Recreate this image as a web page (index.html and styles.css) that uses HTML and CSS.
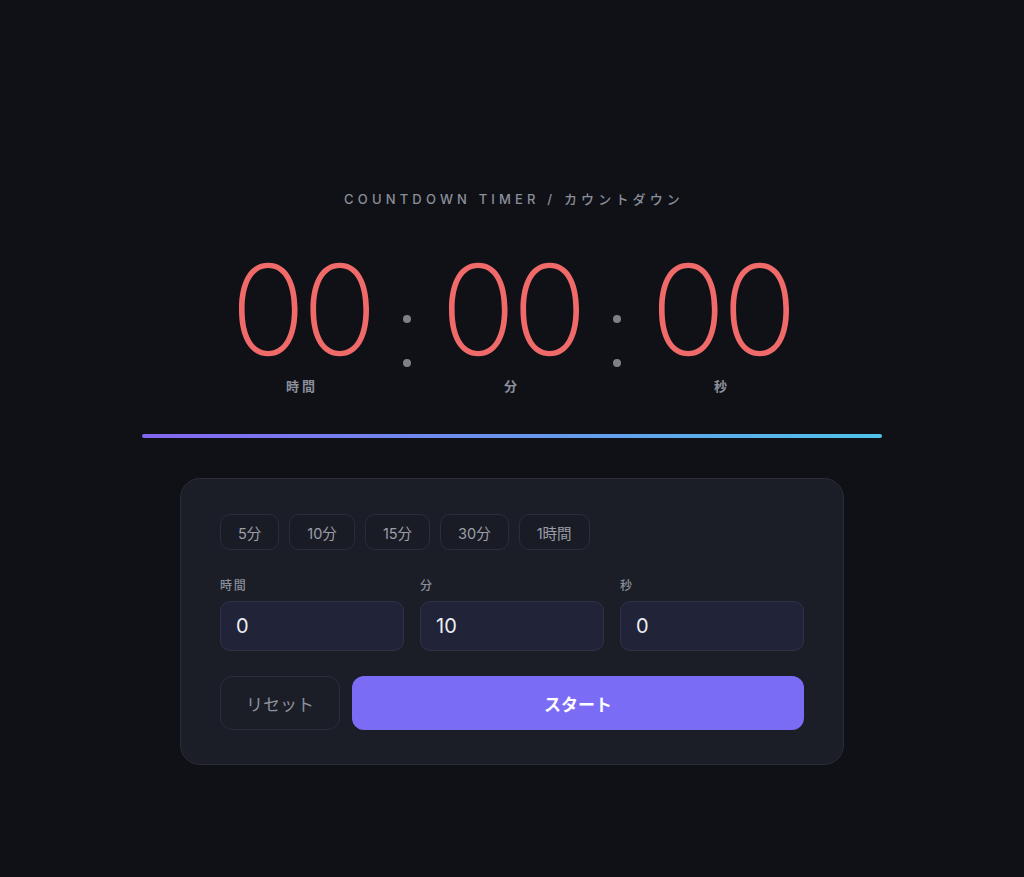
FILE: index.html
```html
<!DOCTYPE html>
<html lang="ja">
<head>
<meta charset="utf-8">
<title>Countdown Timer</title>
<link rel="stylesheet" href="styles.css">
</head>
<body>
<main class="page">
  <div class="title">COUNTDOWN TIMER / カウントダウン</div>
  <div class="clock">
    <div class="unit">
      <div class="digits">00</div>
      <div class="unit-label">時間</div>
    </div>
    <div class="colon"><span class="dot"></span><span class="dot"></span></div>
    <div class="unit">
      <div class="digits">00</div>
      <div class="unit-label">分</div>
    </div>
    <div class="colon"><span class="dot"></span><span class="dot"></span></div>
    <div class="unit">
      <div class="digits">00</div>
      <div class="unit-label">秒</div>
    </div>
  </div>
  <div class="progress"></div>
  <section class="card">
    <div class="presets">
      <button class="chip">5分</button>
      <button class="chip">10分</button>
      <button class="chip">15分</button>
      <button class="chip">30分</button>
      <button class="chip">1時間</button>
    </div>
    <div class="fields">
      <label class="field"><span class="field-label">時間</span><input class="field-input" type="text" value="0"></label>
      <label class="field"><span class="field-label">分</span><input class="field-input" type="text" value="10"></label>
      <label class="field"><span class="field-label">秒</span><input class="field-input" type="text" value="0"></label>
    </div>
    <div class="actions">
      <button class="btn-reset">リセット</button>
      <button class="btn-start">スタート</button>
    </div>
  </section>
</main>
</body>
</html>
```

FILE: styles.css
```css
* { box-sizing: border-box; }
html, body { margin: 0; padding: 0; }
body {
  background: #101117;
  font-family: Inter, "Noto Sans CJK JP", sans-serif;
  color: #e6e7ec;
  min-height: 877px;
}
.page {
  display: flex;
  flex-direction: column;
  align-items: center;
  padding-top: 191px;
}
.title {
  font-size: 13px;
  line-height: 16px;
  letter-spacing: 0.32em;
  color: #8a8f9b;
  font-weight: 500;
  padding-left: 0.32em;
}
.clock {
  display: flex;
  margin-top: 37px;
}
.unit {
  width: 150px;
  display: flex;
  flex-direction: column;
  align-items: center;
  padding-top: 3px;
}
.digits {
  font-size: 125px;
  line-height: 125px;
  font-weight: 200;
  letter-spacing: -4px;
  color: #f06a6a;
}
.unit-label {
  margin-top: 6px;
  font-size: 13px;
  line-height: 16px;
  letter-spacing: 3px;
  font-weight: 600;
  color: #8a8f9b;
}
.colon {
  width: 60px;
  display: flex;
  flex-direction: column;
  align-items: center;
  gap: 36px;
  padding-top: 71px;
}
.dot {
  width: 8px;
  height: 8px;
  border-radius: 50%;
  background: #7d8089;
}
.progress {
  width: 740px;
  height: 4px;
  border-radius: 2px;
  margin-top: 40px;
  background: linear-gradient(90deg, #8466f0, #4fc3e9);
}
.card {
  width: 664px;
  margin-top: 40px;
  padding: 35px 39px 34px;
  background: #1b1d27;
  border: 1px solid #2a2d3a;
  border-radius: 20px;
}
.presets {
  display: flex;
  gap: 10px;
}
.chip {
  height: 36px;
  padding: 0 17px;
  border: 1px solid #2a2d3a;
  border-radius: 10px;
  background: #1a1c25;
  color: #9a9ea8;
  font-family: Inter, "Noto Sans CJK JP", sans-serif;
  font-size: 14.5px;
}
.fields {
  display: grid;
  grid-template-columns: repeat(3, 1fr);
  gap: 16px;
  margin-top: 28px;
}
.field {
  display: flex;
  flex-direction: column;
  gap: 8px;
}
.field-label {
  font-size: 12px;
  line-height: 15px;
  letter-spacing: 0.15em;
  font-weight: 500;
  color: #8a8f9b;
}
.field-input {
  width: 100%;
  height: 50px;
  padding: 0 15px;
  background: #212438;
  border: 1px solid #2f3346;
  border-radius: 10px;
  color: #eceef3;
  font-family: Inter, "Noto Sans CJK JP", sans-serif;
  font-size: 20px;
  outline: none;
}
.actions {
  display: flex;
  gap: 12px;
  margin-top: 25px;
}
.btn-reset {
  width: 120px;
  height: 54px;
  border: 1px solid #2a2d3a;
  border-radius: 12px;
  background: transparent;
  color: #8d929c;
  font-family: Inter, "Noto Sans CJK JP", sans-serif;
  font-size: 17px;
}
.btn-start {
  flex: 1;
  height: 54px;
  border: none;
  border-radius: 12px;
  background: #7b6cf6;
  color: #ffffff;
  font-family: Inter, "Noto Sans CJK JP", sans-serif;
  font-size: 17px;
  font-weight: 700;
}
```
